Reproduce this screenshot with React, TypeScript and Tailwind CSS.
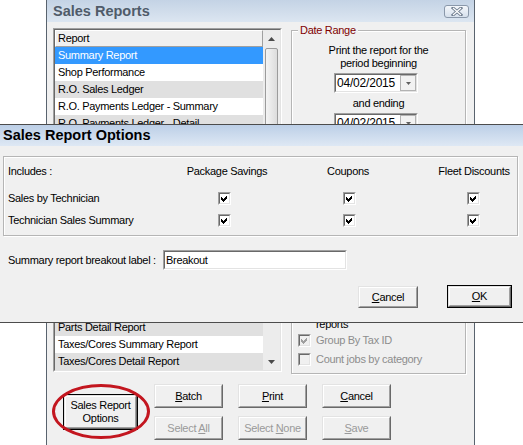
import React from "react";

function Sunken({
  className = "",
  innerClassName = "",
  children,
}: {
  className?: string;
  innerClassName?: string;
  children?: React.ReactNode;
}) {
  return (
    <div className={`border border-t-[#a0a0a0] border-l-[#a0a0a0] border-r-white border-b-white ${className}`}>
      <div
        className={`h-full w-full border border-t-[#696969] border-l-[#696969] border-r-[#e3e3e3] border-b-[#e3e3e3] ${innerClassName}`}
      >
        {children}
      </div>
    </div>
  );
}

function CheckBox({ checked, disabled, className = "" }: { checked?: boolean; disabled?: boolean; className?: string }) {
  return (
    <Sunken
      className={`h-[13px] w-[13px] shrink-0 ${className}`}
      innerClassName={disabled ? "bg-[#f0f0f0]" : "bg-white"}
    >
      {checked && (
        <svg viewBox="0 0 9 9" className="block h-[9px] w-[9px]" shapeRendering="crispEdges">
          <polygon points="1,3 3,5 7,1 7,4 3,8 1,6" fill={disabled ? "#a0a0a0" : "#000"} />
        </svg>
      )}
    </Sunken>
  );
}

function Btn({
  children,
  className = "",
  disabled,
  isDefault,
}: {
  children: React.ReactNode;
  className?: string;
  disabled?: boolean;
  isDefault?: boolean;
}) {
  const face = (
    <div className="h-full w-full border border-t-[#e3e3e3] border-l-[#e3e3e3] border-r-[#696969] border-b-[#696969]">
      <div
        className={`flex h-full w-full items-center justify-center whitespace-nowrap border border-t-white border-l-white border-r-[#a0a0a0] border-b-[#a0a0a0] bg-[#f0f0f0] text-center leading-[13px] ${
          disabled ? "text-[#9a9a9a]" : "text-black"
        }`}
      >
        {children}
      </div>
    </div>
  );
  return isDefault ? (
    <div className={`border border-black ${className}`}>{face}</div>
  ) : (
    <div className={className}>{face}</div>
  );
}

function CloseBtn() {
  return (
    <div className="flex h-[13px] w-[25px] items-center justify-center rounded-[3px] border border-[#8a98aa] bg-linear-to-b from-[#f4f7fb] to-[#d6e0ec]">
      <svg viewBox="0 0 12 9" className="h-[9px] w-[12px]">
        <path d="M2 1 L10 8 M10 1 L2 8" stroke="#6e7c8e" strokeWidth="3" strokeLinecap="square" />
        <path d="M2 1 L10 8 M10 1 L2 8" stroke="#ffffff" strokeWidth="1.2" />
      </svg>
    </div>
  );
}

function Arrow({ up }: { up?: boolean }) {
  return (
    <svg viewBox="0 0 7 4" className="h-[4px] w-[7px]">
      <polygon points={up ? "0,4 3.5,0 7,4" : "0,0 7,0 3.5,4"} fill="#4a4a4a" />
    </svg>
  );
}

const rows = [
  "Summary Report",
  "Shop Performance",
  "R.O. Sales Ledger",
  "R.O. Payments Ledger - Summary",
  "R.O. Payments Ledger - Detail",
  "Daily Sales Summary",
  "Sales by Category",
  "Sales by Technician",
  "Technician Sales Summary",
  "Labor Detail Report",
  "Parts Summary Report",
  "Sales Tax Report",
  "Customer Sales Report",
  "Vendor Sales Report",
  "Inventory Sales Report",
  "Parts Summary by Vendor",
  "Parts Detail Report",
  "Taxes/Cores Summary Report",
  "Taxes/Cores Detail Report",
];

function ListBox() {
  return (
    <Sunken className="mt-[4px] h-[344px] w-[229px] shrink-0" innerClassName="flex bg-white">
      <div className="flex-1 overflow-hidden">
        <div className="h-[17px] border border-t-white border-l-white border-r-[#a0a0a0] border-b-[#a0a0a0] bg-[#f0f0f0] pl-[2px] leading-[15px]">
          Report
        </div>
        {rows.map((r, i) => (
          <div
            key={r}
            className={`h-[17px] whitespace-nowrap pl-[3px] leading-[17px] ${
              i === 0 ? "bg-[#3399ff] text-white" : i % 2 === 0 ? "bg-[#e0e0e0]" : "bg-white"
            }`}
          >
            {r}
          </div>
        ))}
      </div>
      <div className="flex w-[17px] flex-col bg-[#ececec]">
        <div className="flex h-[17px] items-center justify-center">
          <Arrow up />
        </div>
        <div className="flex-1 px-[2px] pt-[1px]">
          <div className="h-[240px] rounded-[2px] border border-[#9b9b9b] bg-linear-to-r from-[#f4f4f4] to-[#dcdcdc]" />
        </div>
        <div className="flex h-[17px] items-center justify-center">
          <Arrow />
        </div>
      </div>
    </Sunken>
  );
}

function DateCombo({ className = "" }: { className?: string }) {
  return (
    <Sunken className={`mr-[5px] h-[20px] w-[84px] ${className}`} innerClassName="flex bg-white">
      <div className="flex-1 pl-[1px] text-[12px] leading-[16px] tracking-[-0.2px]">04/02/2015</div>
      <div className="flex w-[16px] items-center justify-center border border-[#b2b2b2] bg-[#f2f2f2]">
        <svg viewBox="0 0 5 3" className="h-[3px] w-[5px]">
          <polygon points="0,0 5,0 2.5,3" fill="#606060" />
        </svg>
      </div>
    </Sunken>
  );
}

function DateGroup() {
  return (
    <fieldset className="flex h-[350px] w-[175px] shrink-0 flex-col items-center border border-[#b5b5b5] shadow-[inset_1px_1px_0_#fff,1px_1px_0_#fff]">
      <legend className="ml-[6px] bg-[#f0f0f0] px-[2px] leading-[13px] text-[#800000]">Date Range</legend>
      <div className="mt-[7px] text-center leading-[13px]">
        Print the report for the
        <br />
        period beginning
      </div>
      <DateCombo className="mt-[3px]" />
      <div className="mt-[4px] leading-[13px]">and ending</div>
      <DateCombo className="mt-[3px]" />
      <div className="mt-auto w-full pb-[4px] pl-[6px]">
        <div className="flex h-[26px] gap-[5px] leading-[13px]">
          <CheckBox />
          <span>
            Include sublet detail in
            <br />
            reports
          </span>
        </div>
        <div className="flex h-[19px] items-center gap-[5px] text-[#8d8d8d]">
          <CheckBox checked disabled />
          <span>Group By Tax ID</span>
        </div>
        <div className="flex h-[19px] items-center gap-[5px] text-[#8d8d8d]">
          <CheckBox disabled />
          <span>Count jobs by category</span>
        </div>
      </div>
    </fieldset>
  );
}

function SalesReports() {
  return (
    <div className="absolute left-[46px] top-0 flex h-[460px] w-[429px] flex-col border-x border-[#59636e] bg-[#f0f0f0]">
      <div className="flex h-[22px] shrink-0 items-center justify-between bg-linear-to-b from-[#c4d3e5] to-[#dce6f1] pl-[6px] pr-[5px]">
        <span className="text-[14.5px] font-bold leading-none tracking-normal text-[#4f5b69]">Sales Reports</span>
        <CloseBtn />
      </div>
      <div className="flex items-start gap-[9px] pl-[6px] pt-[2px]">
        <ListBox />
        <DateGroup />
      </div>
      <div className="mt-[10px] flex items-center pl-[16px]">
        <div className="relative h-[36px] w-[75px]">
          <Btn isDefault className="h-full w-full">
            Sales Report
            <br />
            Options
          </Btn>
          <div className="absolute -bottom-[9px] -left-[11px] -right-[12px] -top-[10px] rounded-[50%] border-[3px] border-[#c3161f]" />
        </div>
        <div className="ml-[16px] grid grid-cols-[69px_69px_69px] grid-rows-[24px_24px] gap-x-[15px] gap-y-[8px]">
          <Btn>
            <span>
              <u>B</u>atch
            </span>
          </Btn>
          <Btn>
            <span>
              <u>P</u>rint
            </span>
          </Btn>
          <Btn>
            <span>
              <u>C</u>ancel
            </span>
          </Btn>
          <Btn disabled>
            <span>
              Select <u>A</u>ll
            </span>
          </Btn>
          <Btn disabled>
            <span>
              Select <u>N</u>one
            </span>
          </Btn>
          <Btn disabled>
            <span>
              <u>S</u>ave
            </span>
          </Btn>
        </div>
      </div>
    </div>
  );
}

function OptRow({ label, header }: { label: string; header?: boolean }) {
  return (
    <div className="grid h-[22px] grid-cols-[159px_120px_122px_1fr] items-center whitespace-nowrap">
      <div>{label}</div>
      {header ? (
        <>
          <div className="text-center">Package Savings</div>
          <div className="text-center">Coupons</div>
          <div className="pl-[22px] text-center">Fleet Discounts</div>
        </>
      ) : (
        <>
          <div className="flex justify-center">
            <CheckBox checked className="mr-[5px]" />
          </div>
          <div className="flex justify-center">
            <CheckBox checked className="ml-[3px]" />
          </div>
          <div className="flex justify-center pl-[22px]">
            <CheckBox checked className="mr-[2px]" />
          </div>
        </>
      )}
    </div>
  );
}

function OptionsDialog() {
  return (
    <div className="absolute left-[-5px] top-[124px] w-[531px] border border-[#4c4c4c] bg-[#f0f0f0]">
      <div className="flex h-[21px] items-center bg-linear-to-b from-[#bccfe7] to-[#dee8f4] pl-[7px] text-[14.5px] font-bold leading-none tracking-normal">
        Sales Report Options
      </div>
      <div className="px-[7px] pb-[14px] pt-[10px]">
        <div className="h-[80px] border border-[#b5b5b5] pl-[4px] pt-[3px] shadow-[inset_1px_1px_0_#fff,1px_1px_0_#fff]">
          <OptRow header label="Includes :" />
          <div className="mt-[5px]">
            <OptRow label="Sales by Technician" />
          </div>
          <OptRow label="Technician Sales Summary" />
        </div>
        <div className="mt-[14px] flex h-[20px] items-center">
          <div className="w-[160px] whitespace-nowrap pl-[5px]">Summary report breakout label :</div>
          <Sunken className="h-[20px] w-[184px]" innerClassName="bg-white pl-[1px] leading-[16px]">
            Breakout
          </Sunken>
        </div>
        <div className="mt-[15px] flex items-end justify-end gap-[29px] pr-[6px]">
          <Btn className="h-[22px] w-[60px]">
            <span>
              <u>C</u>ancel
            </span>
          </Btn>
          <Btn isDefault className="h-[23px] w-[65px]">
            <span>
              <u>O</u>K
            </span>
          </Btn>
        </div>
      </div>
    </div>
  );
}

export default function App() {
  return (
    <div className="relative h-[445px] w-[523px] overflow-hidden bg-white font-['Liberation_Sans',Arial,sans-serif] text-[11px] tracking-[-0.3px] text-black">
      <SalesReports />
      <OptionsDialog />
    </div>
  );
}
